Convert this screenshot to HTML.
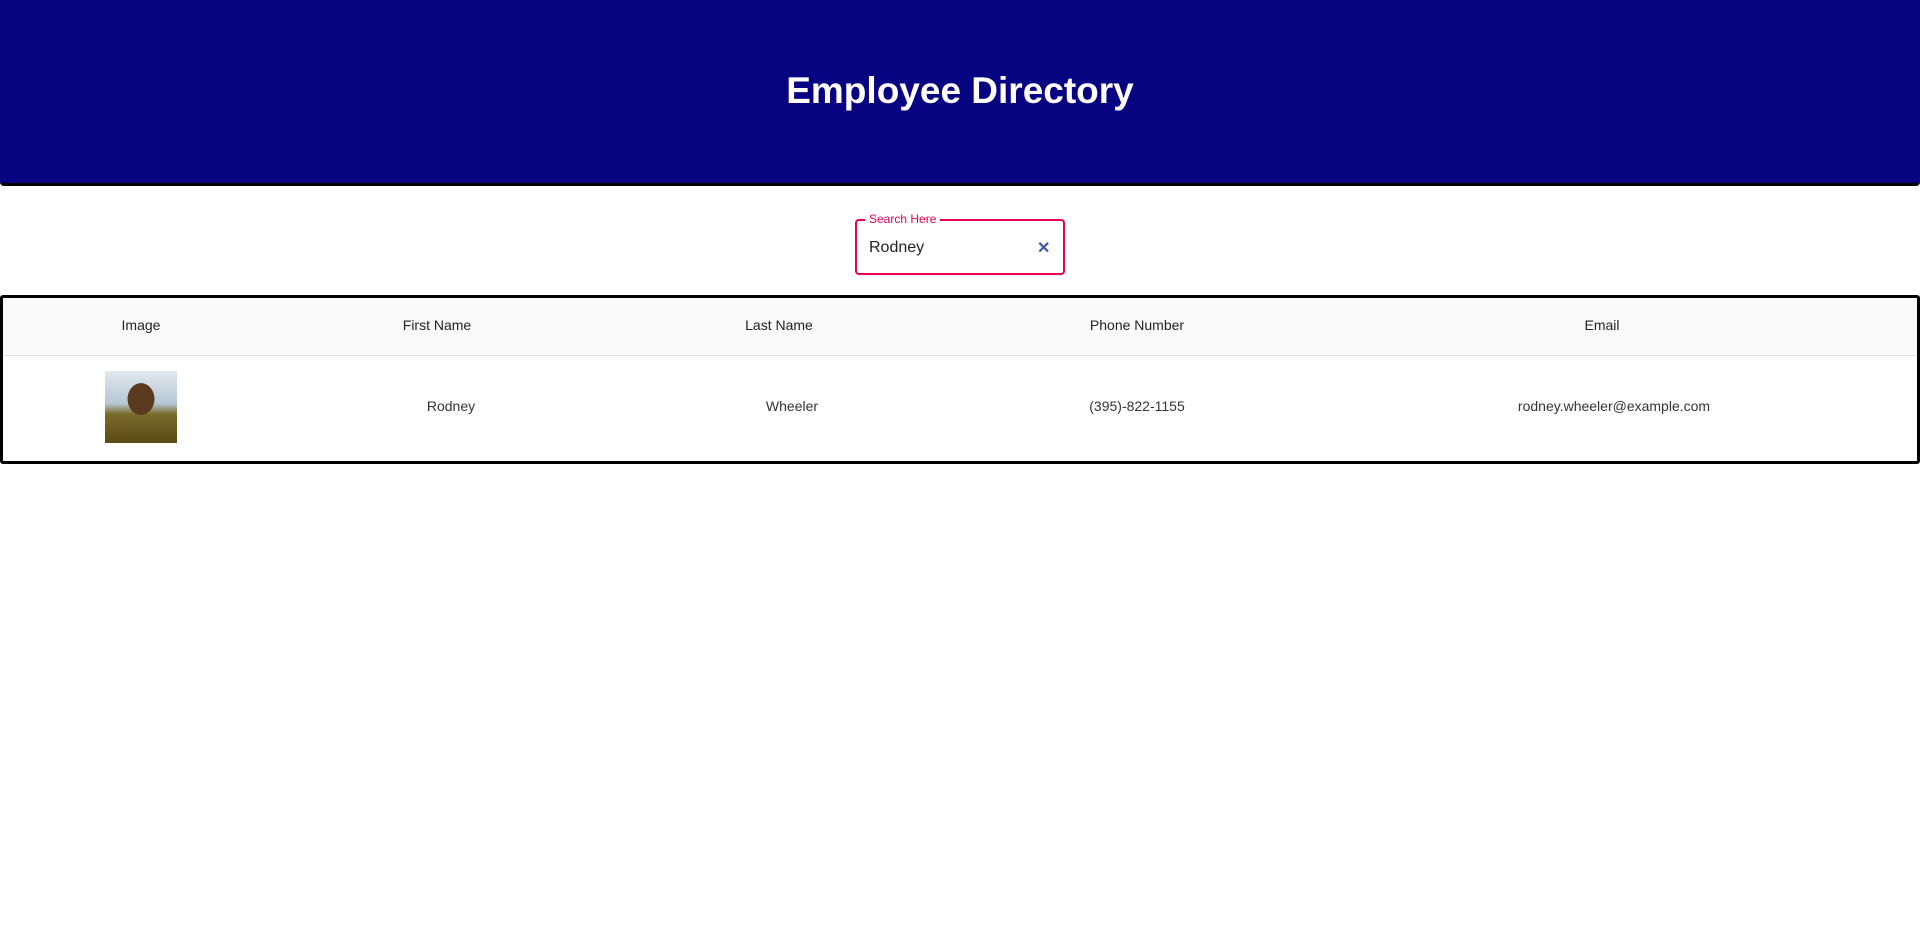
<!DOCTYPE html>
<html><head><meta charset="utf-8"><style>
body{margin:0;width:1920px;height:936px;background:#fff;font-family:"Liberation Sans",sans-serif;position:relative;overflow:hidden}
.hdr{position:absolute;left:0;top:0;width:1920px;height:183px;background:#080380;border-bottom:3px solid #000;border-radius:0 0 4px 4px;box-sizing:content-box}
.hdr h1{margin:0;position:absolute;left:0;right:0;top:67px;text-align:center;color:#fff;font-size:37px;font-weight:bold;line-height:48px}
.search{position:absolute;left:855px;top:219px;width:206px;height:52px;border:2px solid #e8004f;border-radius:4px}
.search .lbl{position:absolute;left:8px;top:-9px;background:#fff;padding:0 4px;font-size:12px;color:#e8004f;line-height:14px}
.search .val{position:absolute;left:12px;top:18px;font-size:16px;color:#222}
.search .x{position:absolute;left:180px;top:17px;font-size:16px;font-weight:bold;color:#3b5998}
.tbl{position:absolute;left:0;top:295px;width:1914px;height:163px;border:3px solid #000;border-radius:3px}
.th{position:absolute;left:0;top:0;width:100%;height:57px;background:#fafafa;border-bottom:1px solid #e0e0e0}
.c{position:absolute;transform:translateX(-50%);font-size:14px;white-space:nowrap}
.th .c{top:19px;color:#222}
.td{top:100px;color:#333}
.img{position:absolute;left:102px;top:73px;width:72px;height:72px;background:radial-gradient(ellipse 22px 26px at 36px 28px,#5a3a1f 60%,transparent 62%),linear-gradient(180deg,#dfe8ef 0%,#b7c7d4 45%,#7a6a2a 60%,#5a4a14 100%)}
</style></head><body>
<div class="hdr"><h1>Employee Directory</h1></div>
<div class="search"><span class="lbl">Search Here</span><span class="val">Rodney</span><span class="x">✕</span></div>
<div class="tbl">
 <div class="th">
  <span class="c" style="left:138px">Image</span>
  <span class="c" style="left:434px">First Name</span>
  <span class="c" style="left:776px">Last Name</span>
  <span class="c" style="left:1134px">Phone Number</span>
  <span class="c" style="left:1599px">Email</span>
 </div>
 <div class="img"></div>
 <span class="c td" style="left:448px">Rodney</span>
 <span class="c td" style="left:789px">Wheeler</span>
 <span class="c td" style="left:1134px">(395)-822-1155</span>
 <span class="c td" style="left:1611px">rodney.wheeler@example.com</span>
</div>
</body></html>
